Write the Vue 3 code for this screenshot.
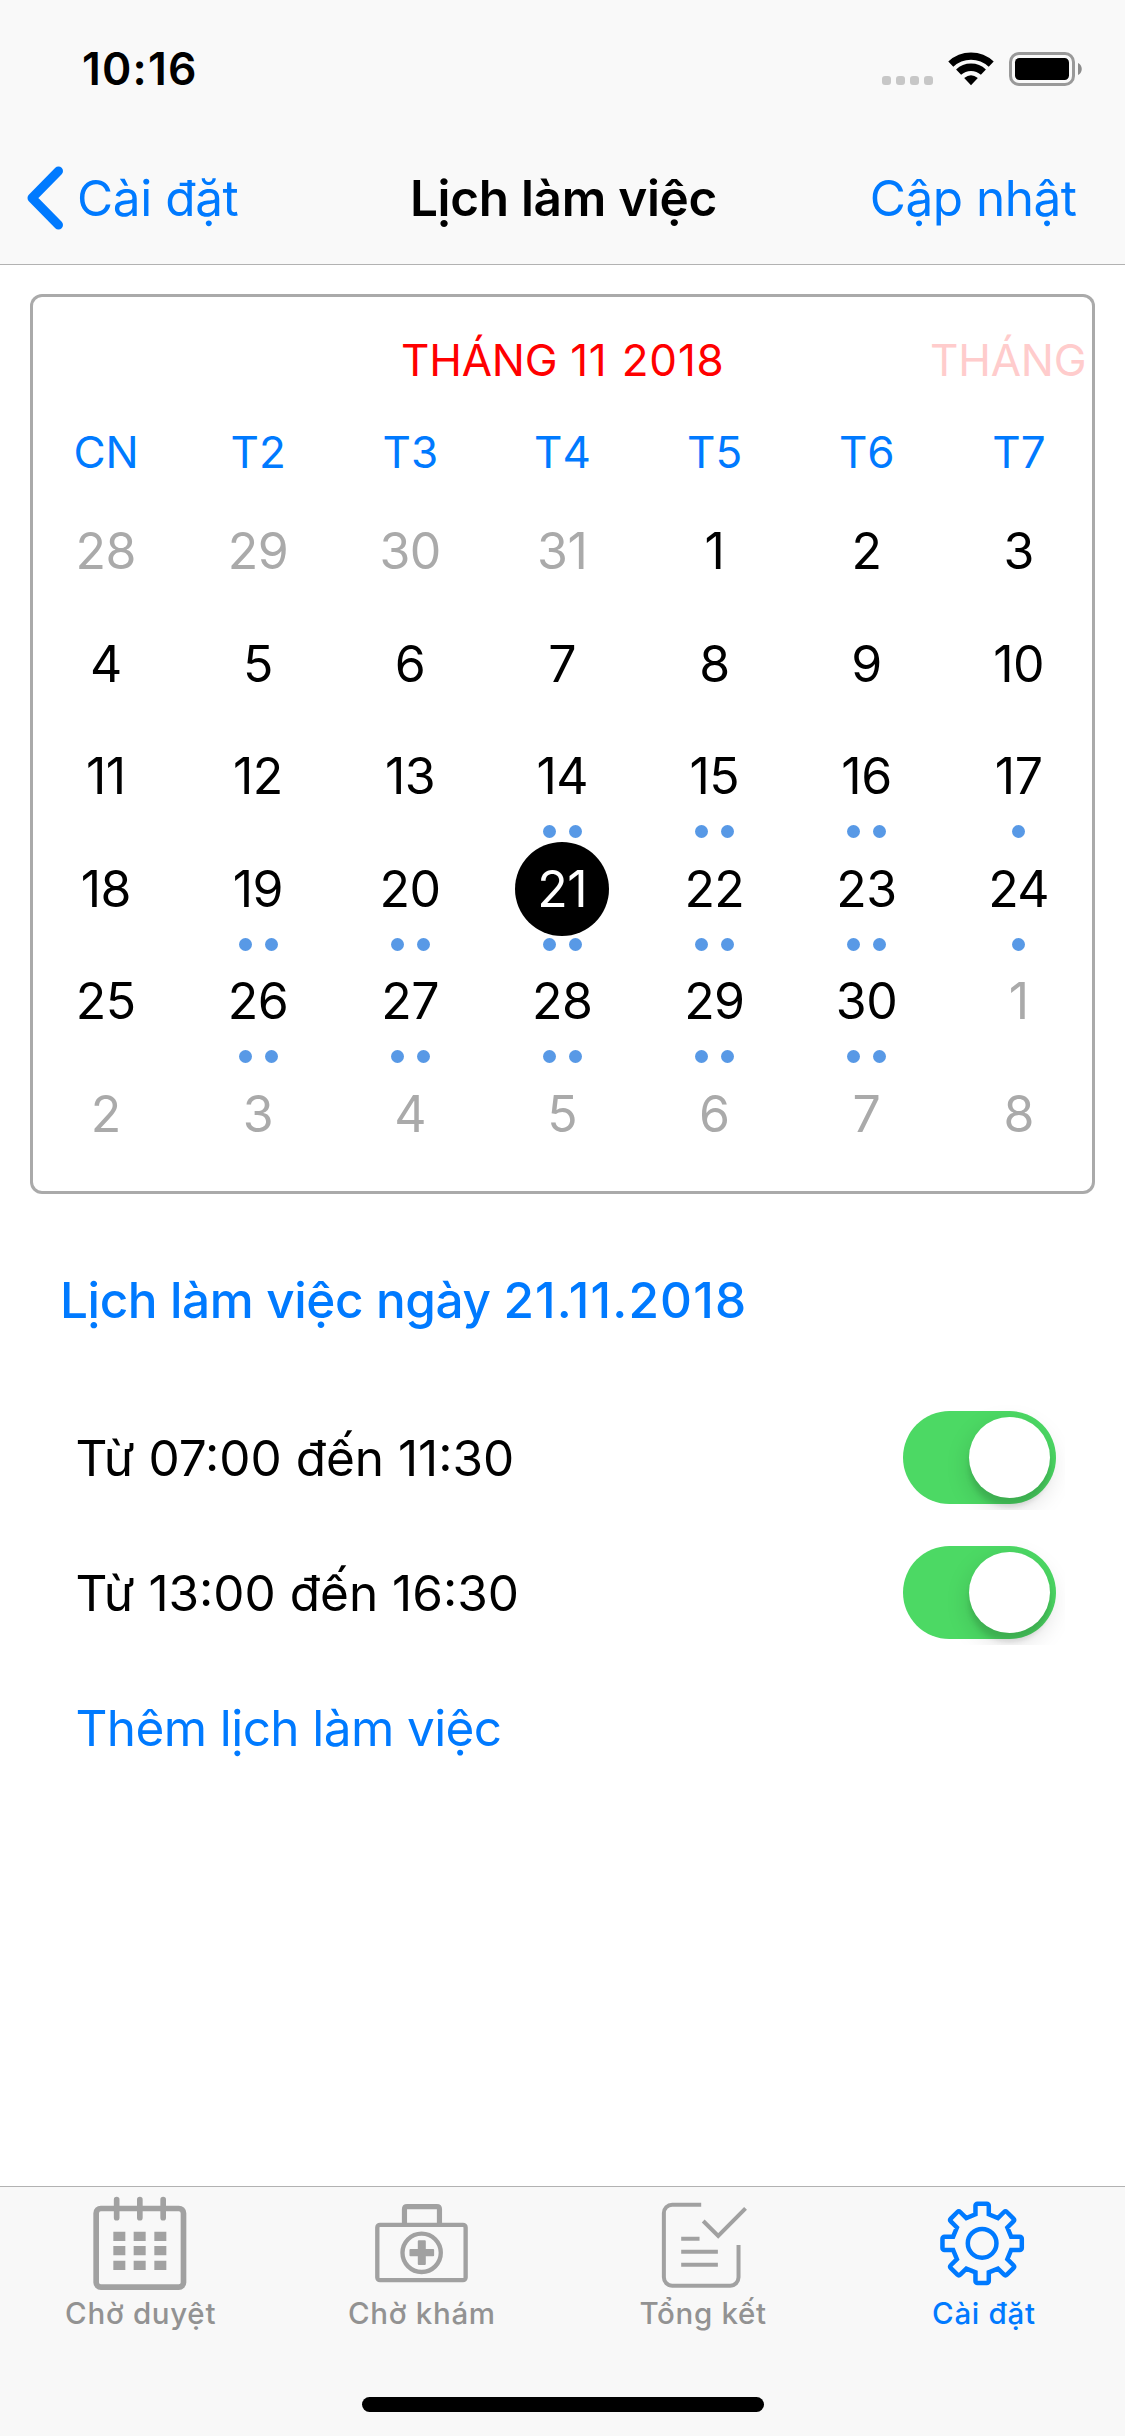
<script setup>
const weekdays = ['CN', 'T2', 'T3', 'T4', 'T5', 'T6', 'T7']

// 28 October is the first visible cell; 42 cells in total
const marks = { 14: 2, 15: 2, 16: 2, 17: 1, 19: 2, 20: 2, 21: 2, 22: 2, 23: 2, 24: 1, 26: 2, 27: 2, 28: 2, 29: 2, 30: 2 }
const days = Array.from({ length: 42 }, (_, i) => {
  const n = i - 3
  if (n < 1) return { key: i, label: 31 + n, muted: true, dots: 0 }
  if (n > 30) return { key: i, label: n - 30, muted: true, dots: 0 }
  return { key: i, label: n, muted: false, dots: marks[n] || 0, selected: n === 21 }
})

const slots = [
  { id: 'am', label: 'Từ 07:00 đến 11:30' },
  { id: 'pm', label: 'Từ 13:00 đến 16:30' },
]

// Eight-toothed gear outline around the origin
function gearPath() {
  const tooth = [[-20, -87], [-20, -113], [-14, -119], [14, -119], [20, -113], [20, -87]]
  let d = ''
  for (let k = 0; k < 8; k++) {
    const a = (k * Math.PI) / 4
    const pts = tooth.map(([x, y]) => [
      (x * Math.cos(a) - y * Math.sin(a)).toFixed(1),
      (x * Math.sin(a) + y * Math.cos(a)).toFixed(1),
    ])
    d += `${k ? 'L' : 'M'}${pts[0]}L${pts[1]}A6 6 0 0 1 ${pts[2]}L${pts[3]}A6 6 0 0 1 ${pts[4]}L${pts[5]}`
  }
  return d + 'Z'
}
const gear = gearPath()
</script>

<template>
  <div class="screen">
    <header class="top">
      <div class="status">
        <span class="time">10:16</span>
        <div class="indicators">
          <div class="signal"><i v-for="n in 4" :key="n"></i></div>
          <svg class="wifi" viewBox="0 0 46 34" width="46" height="34">
            <g fill="none" stroke="#000" stroke-width="7.3">
              <path d="M2.8 12.2A29.4 29.4 0 0 1 43.2 12.2" />
              <path d="M10.6 20.2A18 18 0 0 1 35.4 20.2" />
            </g>
            <path d="M23 33.2L16.2 26Q23 20.4 29.8 26Z" fill="#000" />
          </svg>
          <svg class="battery" viewBox="0 0 74 34" width="74" height="34">
            <rect x="1.5" y="1.5" width="63" height="31" rx="8.5" fill="none" stroke="#999" stroke-width="3" />
            <rect x="6" y="6" width="54" height="22" rx="4.5" fill="#000" />
            <path d="M69 11C74 13 74 21 69 23Z" fill="#8c8c8c" />
          </svg>
        </div>
      </div>
      <nav class="nav">
        <a class="back">
          <svg viewBox="0 0 40 66" width="40" height="66">
            <path d="M34.5 6L8 33L34.5 60" fill="none" stroke="#007aff" stroke-width="9" stroke-linecap="round" stroke-linejoin="round" />
          </svg>
          <span class="back-label">Cài đặt</span>
        </a>
        <h1 class="title">Lịch làm việc</h1>
        <a class="update">Cập nhật</a>
      </nav>
    </header>

    <main class="content">
      <section class="calendar">
        <div class="months">
          <span class="month">THÁNG <span class="digits">11 2018</span></span>
          <span class="month next">THÁNG</span>
        </div>
        <div class="week">
          <span v-for="w in weekdays" :key="w">{{ w }}</span>
        </div>
        <div class="days">
          <div v-for="d in days" :key="d.key" class="day" :class="{ muted: d.muted, selected: d.selected }">
            <span class="num">{{ d.label }}</span>
            <div class="dots"><i v-for="n in d.dots" :key="n"></i></div>
          </div>
        </div>
      </section>

      <h2 class="heading">Lịch làm việc ngày <span class="date">21.11.2018</span></h2>
      <div v-for="s in slots" :key="s.id" class="row">
        <span class="slot">{{ s.label }}</span>
        <div class="switch-area">
          <div class="switch"><div class="knob"></div></div>
        </div>
      </div>
      <div class="row"><a class="add">Thêm lịch làm việc</a></div>
    </main>

    <footer class="tabbar">
      <div class="tabs">
        <div class="tab">
          <svg viewBox="152 75 300 300" width="100" height="100">
            <g fill="none" stroke="#a1a1a1" stroke-width="17">
              <rect x="167.5" y="115.5" width="262" height="236" rx="14" />
              <path d="M229 89V143M298.5 89V143M368.5 89V143" stroke-linecap="round" />
            </g>
            <path fill="#a1a1a1" d="M219 185h36v28h-36zM280 185h36v28h-36zM342 185h36v28h-36zM219 228h36v28h-36zM280 228h36v28h-36zM342 228h36v28h-36zM219 272h36v28h-36zM280 272h36v28h-36zM342 272h36v28h-36z" />
          </svg>
          <span class="tab-label">Chờ duyệt</span>
        </div>
        <div class="tab">
          <svg viewBox="155.6 75 300 300" width="100" height="100">
            <g fill="none" stroke="#a1a1a1" stroke-width="13">
              <rect x="171.5" y="164.5" width="265" height="166" rx="8" />
              <path d="M253 160V118Q253 110 261 110H350Q358 110 358 118V160" stroke-width="15.5" />
              <circle cx="304.5" cy="248.5" r="57.5" />
            </g>
            <path fill="#a1a1a1" d="M296 211h18q3 0 3 3v23h22q3 0 3 3v16q0 3-3 3h-22v23q0 3-3 3h-18q-3 0-3-3v-23h-22q-3 0-3-3v-16q0-3 3-3h22v-23q0-3 3-3z" />
          </svg>
          <span class="tab-label">Chờ khám</span>
        </div>
        <div class="tab">
          <svg viewBox="159.4 75 300 300" width="100" height="100">
            <g fill="none" stroke="#a1a1a1" stroke-width="12">
              <path d="M304 104H217A25 25 0 0 0 192 129V322A25 25 0 0 0 217 347H391A25 25 0 0 0 416 322V225" />
              <path d="M310 153L355 198L437 115" />
              <path d="M244 206H299M244 245H354M244 284.5H354" />
            </g>
          </svg>
          <span class="tab-label">Tổng kết</span>
        </div>
        <div class="tab active">
          <svg viewBox="223.1 75 300 300" width="100" height="100">
            <g fill="none" stroke="#007aff" stroke-width="13.5" transform="translate(367.5 220)">
              <path :d="gear" />
              <circle r="43" />
            </g>
          </svg>
          <span class="tab-label">Cài đặt</span>
        </div>
      </div>
      <div class="home"></div>
    </footer>
  </div>
</template>

<style>
body { margin: 0; background: #fff; }
</style>

<style scoped>
.screen {
  width: 1125px;
  height: 2436px;
  display: flex;
  flex-direction: column;
  overflow: hidden;
  background: #fff;
  color: #000;
  font-family: Inter, "Liberation Sans", sans-serif;
  font-size: 49.5px;
  letter-spacing: -0.3px;
  white-space: nowrap;
}
.top {
  height: 264px;
  background: #f9f9f9;
  border-bottom: 1px solid #b2b2b2;
}
.status {
  height: 132px;
  display: flex;
  justify-content: space-between;
  padding: 0 43px 0 82px;
}
.time {
  margin-top: 42px;
  height: 54px;
  line-height: 54px;
  font-size: 44.5px;
  font-weight: 600;
  letter-spacing: 1.2px;
}
.indicators {
  height: 34px;
  margin-top: 52px;
  display: flex;
  align-items: flex-start;
}
.signal { display: flex; gap: 5px; margin: 24px 15px 0 0; }
.signal i { width: 9px; height: 9px; border-radius: 3px; background: #c7c7c7; }
.battery { margin-left: 15px; margin-right: -1px; }
.nav {
  height: 132px;
  display: grid;
  grid-template-columns: 1fr auto 1fr;
  align-items: center;
  line-height: 60px;
  padding: 0 24px;
}
.back { display: flex; align-items: center; color: #007aff; }
.back-label { margin-left: 13px; letter-spacing: -0.4px; }
.title { margin: 0 -1px 0 1px; font-size: 49.5px; font-weight: 600; letter-spacing: -0.3px; }
.update { color: #007aff; justify-self: end; margin-right: 24.5px; letter-spacing: -0.5px; }

.content { flex: 1; }
.calendar {
  width: 1065px;
  height: 900px;
  margin: 29px 0 0 30px;
  border-radius: 12px;
  box-shadow: inset 0 0 0 3px #aaa;
}
.months {
  display: flex;
  height: 60px;
  padding-top: 36px;
  margin: 0 3px;
  line-height: 60px;
  font-size: 44px;
  overflow: hidden;
  letter-spacing: -0.2px;
}
.month { flex: none; width: 529px; padding-left: 368px; color: #f00; box-sizing: border-box; }
.month.next { width: auto; padding-left: 0; margin-left: 368px; color: #fcc; }
.digits { letter-spacing: 0.8px; word-spacing: 1px; margin-left: 0.5px; }
.week {
  display: grid;
  grid-template-columns: repeat(7, 1fr);
  margin-top: 32px;
  line-height: 60px;
  font-size: 44px;
  text-align: center;
  color: #007aff;
  letter-spacing: 0;
  font-kerning: none;
}
.days {
  display: grid;
  grid-template-columns: repeat(7, 1fr);
  grid-auto-rows: 112.5px;
  margin-top: 22px;
}
.day { display: flex; flex-direction: column; align-items: center; }
.num {
  width: 94px;
  height: 94px;
  line-height: 95px;
  border-radius: 50%;
  text-align: center;
  font-size: 50px;
  letter-spacing: -0.5px;
  text-indent: -0.5px;
}
.muted { color: #aaa; }
.selected .num { background: #000; color: #fff; }
.dots { display: flex; gap: 13px; margin-top: 2px; }
.dots i { width: 13px; height: 13px; border-radius: 50%; background: #5899e6; }

.heading {
  margin: 76px 0 60px 60px;
  line-height: 60px;
  font-size: 49.5px;
  font-weight: 500;
  color: #007aff;
  letter-spacing: -0.4px;
}
.date { letter-spacing: 1.2px; }
.row {
  height: 135px;
  display: flex;
  align-items: center;
  justify-content: space-between;
  padding: 0 60px 0 75.5px;
}
.slot { letter-spacing: 0; }
.add { color: #007aff; letter-spacing: -0.6px; }
.switch-area {
  width: 162px;
  height: 105px;
  display: flex;
  align-items: center;
  overflow: hidden;
}
.switch {
  width: 147px;
  height: 81px;
  padding: 6px 6px 6px 0;
  display: flex;
  justify-content: flex-end;
  border-radius: 47px;
  background: #4cd964;
}
.knob {
  width: 81px;
  height: 81px;
  border-radius: 50%;
  background: #fff;
  box-shadow: 0 9px 24px rgba(0, 0, 0, 0.15), 0 9px 5px rgba(0, 0, 0, 0.1);
}

.tabbar {
  height: 249px;
  border-top: 1px solid #b2b2b2;
  background: #f8f8f8;
  display: flex;
  flex-direction: column;
  align-items: center;
  justify-content: space-between;
}
.tabs { width: 100%; display: grid; grid-template-columns: repeat(4, 1fr); }
.tab {
  display: flex;
  flex-direction: column;
  align-items: center;
  padding-top: 8px;
  color: #929292;
  font-size: 29.5px;
  font-weight: 500;
  line-height: 36px;
  letter-spacing: 0.7px;
}
.active { color: #007aff; }
.active .tab-label { margin-right: 1px; }
.home { width: 402px; height: 15px; margin-bottom: 24px; border-radius: 8px; background: #000; }
</style>
